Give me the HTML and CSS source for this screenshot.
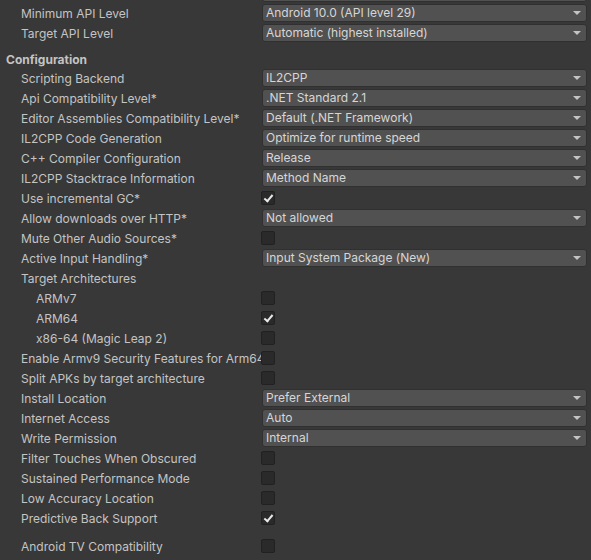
FILE: index.html
```html
<!DOCTYPE html>
<html lang="en">

<head>
    <meta charset="UTF-8">
    <meta name="viewport" content="width=device-width, initial-scale=1.0">
    <title>Player Settings</title>
    <link rel="stylesheet" href="styles.css">
</head>

<body>
    <div class="inspector">
        <div class="row">
            <span class="label"></span>
            <div class="popup"><span></span></div>
        </div>
        <div class="row">
            <span class="label">Minimum API Level</span>
            <div class="popup"><span>Android 10.0 (API level 29)</span></div>
        </div>
        <div class="row">
            <span class="label">Target API Level</span>
            <div class="popup"><span>Automatic (highest installed)</span></div>
        </div>

        <h2 class="section">Configuration</h2>

        <div class="row">
            <span class="label">Scripting Backend</span>
            <div class="popup"><span>IL2CPP</span></div>
        </div>
        <div class="row">
            <span class="label">Api Compatibility Level*</span>
            <div class="popup"><span>.NET Standard 2.1</span></div>
        </div>
        <div class="row">
            <span class="label">Editor Assemblies Compatibility Level*</span>
            <div class="popup"><span>Default (.NET Framework)</span></div>
        </div>
        <div class="row">
            <span class="label">IL2CPP Code Generation</span>
            <div class="popup"><span>Optimize for runtime speed</span></div>
        </div>
        <div class="row">
            <span class="label">C++ Compiler Configuration</span>
            <div class="popup"><span>Release</span></div>
        </div>
        <div class="row">
            <span class="label">IL2CPP Stacktrace Information</span>
            <div class="popup"><span>Method Name</span></div>
        </div>
        <div class="row">
            <span class="label">Use incremental GC*</span>
            <div class="toggle on"></div>
        </div>
        <div class="row">
            <span class="label">Allow downloads over HTTP*</span>
            <div class="popup"><span>Not allowed</span></div>
        </div>
        <div class="row">
            <span class="label">Mute Other Audio Sources*</span>
            <div class="toggle"></div>
        </div>
        <div class="row">
            <span class="label">Active Input Handling*</span>
            <div class="popup"><span>Input System Package (New)</span></div>
        </div>
        <div class="row">
            <span class="label">Target Architectures</span>
        </div>
        <div class="row sub">
            <span class="label">ARMv7</span>
            <div class="toggle"></div>
        </div>
        <div class="row sub">
            <span class="label">ARM64</span>
            <div class="toggle on"></div>
        </div>
        <div class="row sub">
            <span class="label">x86-64 (Magic Leap 2)</span>
            <div class="toggle"></div>
        </div>
        <div class="row">
            <span class="label">Enable Armv9 Security Features for Arm64</span>
            <div class="toggle"></div>
        </div>
        <div class="row">
            <span class="label">Split APKs by target architecture</span>
            <div class="toggle"></div>
        </div>
        <div class="row">
            <span class="label">Install Location</span>
            <div class="popup"><span>Prefer External</span></div>
        </div>
        <div class="row">
            <span class="label">Internet Access</span>
            <div class="popup"><span>Auto</span></div>
        </div>
        <div class="row">
            <span class="label">Write Permission</span>
            <div class="popup"><span>Internal</span></div>
        </div>
        <div class="row">
            <span class="label">Filter Touches When Obscured</span>
            <div class="toggle"></div>
        </div>
        <div class="row">
            <span class="label">Sustained Performance Mode</span>
            <div class="toggle"></div>
        </div>
        <div class="row">
            <span class="label">Low Accuracy Location</span>
            <div class="toggle"></div>
        </div>
        <div class="row">
            <span class="label">Predictive Back Support</span>
            <div class="toggle on"></div>
        </div>

        <div class="row spaced">
            <span class="label">Android TV Compatibility</span>
            <div class="toggle"></div>
        </div>
    </div>
</body>

</html>
```

FILE: styles.css
```css
* {
    box-sizing: border-box;
    margin: 0;
    padding: 0;
}

body {
    background-color: #383838;
    color: #c4c4c4;
    font-family: Inter, 'Noto Sans', sans-serif;
    font-size: 12px;
    overflow: hidden;
}

.inspector {
    margin-top: -17px;
    padding-right: 4px;
}

.section {
    font-size: 12px;
    font-weight: 700;
    color: #c4c4c4;
    padding: 8px 0 0 6px;
    height: 25px;
    line-height: 17px;
}

.row {
    display: flex;
    align-items: center;
    height: 20px;
}

.row.spaced {
    margin-top: 8px;
}

.label {
    width: 261px;
    flex-shrink: 0;
    padding-left: 21px;
    white-space: nowrap;
    overflow: hidden;
}

.row.sub .label {
    padding-left: 36px;
}

/* dropdown field */
.popup {
    flex: 1;
    height: 18px;
    margin-left: 1px;
    padding: 0 20px 0 3px;
    background-color: #515151;
    border: 1px solid #303030;
    border-radius: 3px;
    color: #d6d6d6;
    line-height: 16px;
    position: relative;
    white-space: nowrap;
}

.popup::after {
    content: "";
    position: absolute;
    right: 5px;
    top: 6px;
    border-left: 4px solid transparent;
    border-right: 4px solid transparent;
    border-top: 4px solid #c4c4c4;
}

/* checkbox */
.toggle {
    width: 14px;
    height: 14px;
    background-color: #2a2a2a;
    border: 1px solid #212121;
    border-radius: 2px;
    position: relative;
}

.toggle.on::after {
    content: "";
    position: absolute;
    left: 4px;
    top: 1px;
    width: 3px;
    height: 7px;
    border-right: 2px solid #e8e8e8;
    border-bottom: 2px solid #e8e8e8;
    transform: rotate(40deg);
}
```
